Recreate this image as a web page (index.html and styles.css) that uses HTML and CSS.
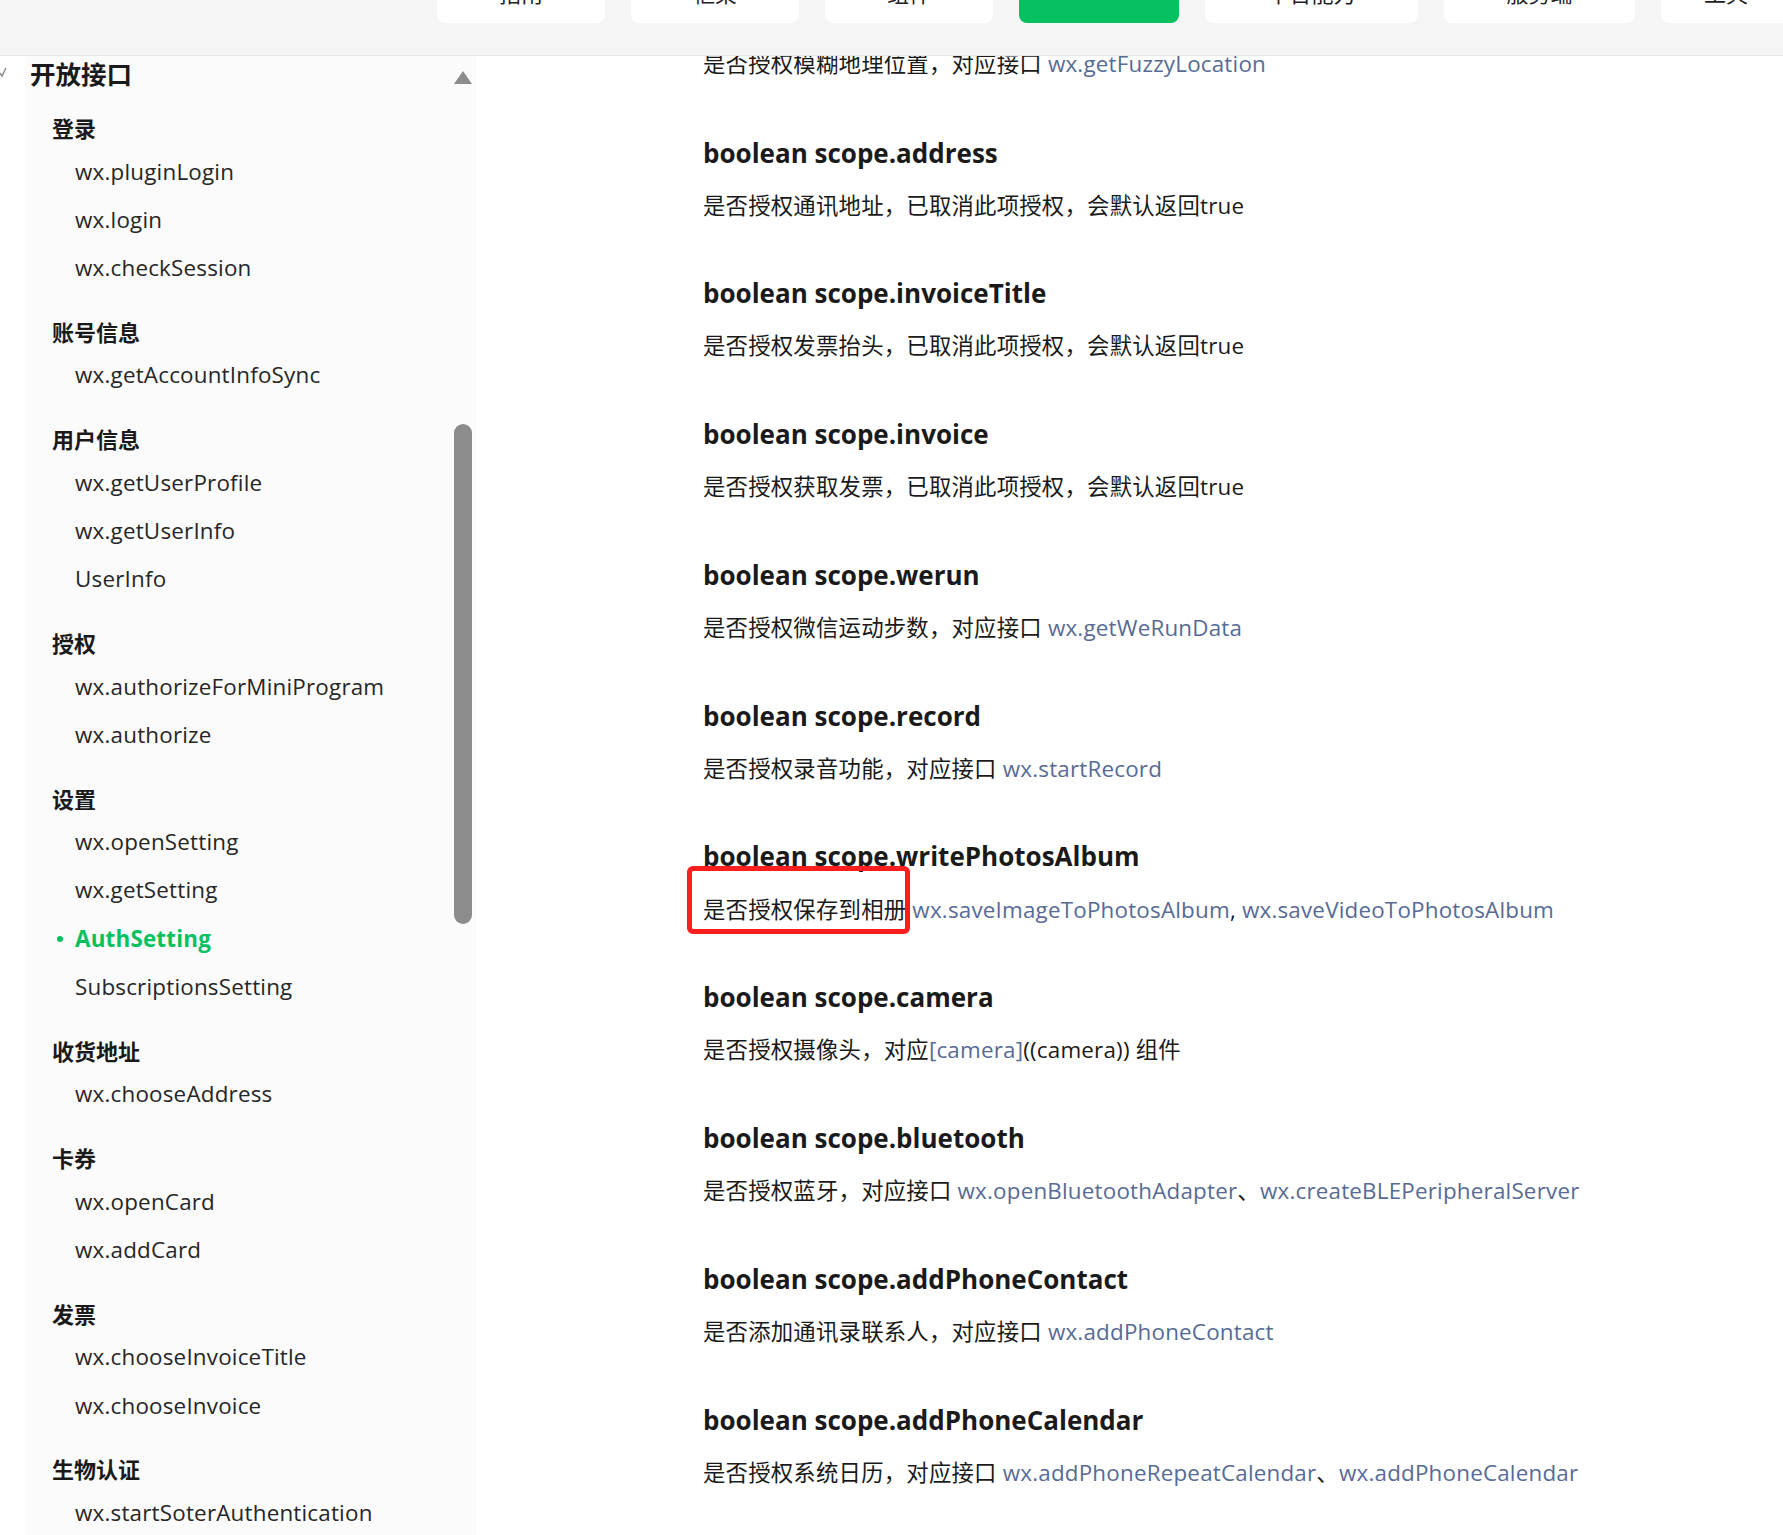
FILE: index.html
```html
<!DOCTYPE html>
<html lang="zh-CN">
<head>
<meta charset="utf-8">
<title>AuthSetting</title>
<link rel="stylesheet" href="styles.css">
</head>
<body>
<header class="topbar">
  <nav class="tabs">
    <a class="tab w168">指南</a>
    <a class="tab w168">框架</a>
    <a class="tab w168">组件</a>
    <a class="tab tab-active w160">API</a>
    <a class="tab w213">平台能力</a>
    <a class="tab w191">服务端</a>
    <a class="tab w130">工具</a>
  </nav>
</header>
<div class="layout">
  <div class="gutter">
    <svg class="fold" width="8" height="12" viewBox="0 0 8 12"><polyline points="0,6 2,9 6,1" fill="none" stroke="#8a8a8a" stroke-width="1.4"/></svg>
  </div>
  <aside class="sidebar">
    <div class="sb-title">开放接口</div>
    <span class="sb-arrow"></span>
    <span class="sb-thumb"></span>
    <div class="group first">
      <div class="g-head">登录</div>
      <div class="item">wx.pluginLogin</div>
      <div class="item">wx.login</div>
      <div class="item">wx.checkSession</div>
    </div>
    <div class="group">
      <div class="g-head">账号信息</div>
      <div class="item">wx.getAccountInfoSync</div>
    </div>
    <div class="group">
      <div class="g-head">用户信息</div>
      <div class="item">wx.getUserProfile</div>
      <div class="item">wx.getUserInfo</div>
      <div class="item">UserInfo</div>
    </div>
    <div class="group">
      <div class="g-head">授权</div>
      <div class="item">wx.authorizeForMiniProgram</div>
      <div class="item">wx.authorize</div>
    </div>
    <div class="group">
      <div class="g-head">设置</div>
      <div class="item">wx.openSetting</div>
      <div class="item">wx.getSetting</div>
      <div class="item active">AuthSetting</div>
      <div class="item">SubscriptionsSetting</div>
    </div>
    <div class="group">
      <div class="g-head">收货地址</div>
      <div class="item">wx.chooseAddress</div>
    </div>
    <div class="group">
      <div class="g-head">卡券</div>
      <div class="item">wx.openCard</div>
      <div class="item">wx.addCard</div>
    </div>
    <div class="group">
      <div class="g-head">发票</div>
      <div class="item">wx.chooseInvoiceTitle</div>
      <div class="item">wx.chooseInvoice</div>
    </div>
    <div class="group">
      <div class="g-head">生物认证</div>
      <div class="item">wx.startSoterAuthentication</div>
    </div>
  </aside>
  <main class="content">
    <p class="desc first">是否授权模糊地理位置，对应接口 <a class="link">wx.getFuzzyLocation</a></p>

    <h3 class="prop">boolean scope.address</h3>
    <p class="desc">是否授权通讯地址，已取消此项授权，会默认返回true</p>

    <h3 class="prop">boolean scope.invoiceTitle</h3>
    <p class="desc">是否授权发票抬头，已取消此项授权，会默认返回true</p>

    <h3 class="prop">boolean scope.invoice</h3>
    <p class="desc">是否授权获取发票，已取消此项授权，会默认返回true</p>

    <h3 class="prop">boolean scope.werun</h3>
    <p class="desc">是否授权微信运动步数，对应接口 <a class="link">wx.getWeRunData</a></p>

    <h3 class="prop">boolean scope.record</h3>
    <p class="desc">是否授权录音功能，对应接口 <a class="link">wx.startRecord</a></p>

    <h3 class="prop">boolean scope.writePhotosAlbum</h3>
    <p class="desc marked"><span class="annot"></span>是否授权保存到相册 <a class="link">wx.saveImageToPhotosAlbum</a>, <a class="link">wx.saveVideoToPhotosAlbum</a></p>

    <h3 class="prop">boolean scope.camera</h3>
    <p class="desc">是否授权摄像头，对应<a class="link">[camera]</a>((camera)) 组件</p>

    <h3 class="prop">boolean scope.bluetooth</h3>
    <p class="desc">是否授权蓝牙，对应接口 <a class="link">wx.openBluetoothAdapter</a>、<a class="link">wx.createBLEPeripheralServer</a></p>

    <h3 class="prop">boolean scope.addPhoneContact</h3>
    <p class="desc">是否添加通讯录联系人，对应接口 <a class="link">wx.addPhoneContact</a></p>

    <h3 class="prop">boolean scope.addPhoneCalendar</h3>
    <p class="desc">是否授权系统日历，对应接口 <a class="link">wx.addPhoneRepeatCalendar</a>、<a class="link">wx.addPhoneCalendar</a></p>
  </main>
</div>
</body>
</html>
```
FILE: styles.css
```css
html, body {
  margin: 0;
  padding: 0;
  height: 100%;
  overflow: hidden;
  background: #ffffff;
}
body {
  font-family: "Open Sans", "Noto Sans CJK SC", sans-serif;
  color: #1a1a1a;
}

/* top bar */
.topbar {
  position: relative;
  z-index: 2;
  height: 55px;
  background: #f5f5f5;
  border-bottom: 1px solid #e9e9e9;
  overflow: hidden;
}
.tabs {
  display: flex;
  gap: 26px;
  padding-left: 437px;
}
.tab {
  flex-shrink: 0;
  box-sizing: border-box;
  height: 23px;
  background: #ffffff;
  border-radius: 0 0 8px 8px;
  display: flex;
  justify-content: center;
  align-items: flex-end;
  padding-bottom: 19px;
  font-size: 22px;
  line-height: 22px;
  color: #222;
  overflow: hidden;
}
.tab-active { background: #07c160; color: #fff; padding-bottom: 22px; }
.w168 { width: 168px; }
.w160 { width: 160px; }
.w213 { width: 213px; }
.w191 { width: 191px; }
.w130 { width: 130px; }

/* layout */
.layout {
  display: flex;
  align-items: flex-start;
}
.gutter {
  width: 25px;
  flex-shrink: 0;
  padding-top: 11px;
}
.fold { display: block; }

/* sidebar */
.sidebar {
  position: relative;
  width: 452px;
  flex-shrink: 0;
  background: #fbfbfb;
  min-height: 1480px;
  padding-left: 5px;
  box-sizing: border-box;
}
.sb-title {
  font-size: 25.5px;
  line-height: 36px;
  font-weight: 700;
  color: #1a1a1a;
}
.sb-arrow {
  position: absolute;
  left: 429px;
  top: 15px;
  width: 0;
  height: 0;
  border-left: 9px solid transparent;
  border-right: 9px solid transparent;
  border-bottom: 13px solid #8c8c8c;
}
.sb-thumb {
  position: absolute;
  left: 429px;
  top: 368px;
  width: 18px;
  height: 500px;
  border-radius: 9px;
  background: #8c8c8c;
}
.group {
  margin-top: 21.5px;
  padding-left: 22px;
}
.group.first { margin-top: 18px; }
.g-head {
  font-size: 22px;
  line-height: 36px;
  margin-bottom: 1.5px;
  font-weight: 700;
  color: #1a1a1a;
}
.item {
  font-size: 22.4px;
  letter-spacing: 0.2px;
  line-height: 48.3px;
  padding-left: 23px;
  color: #262626;
  white-space: nowrap;
  position: relative;
}
.item.active {
  color: #07c160;
  font-weight: 700;
}
.item.active::before {
  content: "";
  position: absolute;
  left: 5px;
  top: 21px;
  width: 6px;
  height: 6px;
  border-radius: 50%;
  background: #07c160;
}

/* content */
.content {
  padding-left: 226px;
  flex: 1;
}
.prop {
  margin: 49.6px 0 0 0;
  font-size: 26px;
  line-height: 40px;
  font-weight: 700;
  color: #1a1a1a;
}
.desc.first + .prop { margin-top: 50.8px; }
.desc {
  margin: 15.2px 0 0 0;
  font-size: 22.4px;
  letter-spacing: 0.2px;
  line-height: 36px;
  color: #1a1a1a;
  white-space: nowrap;
}
.desc.first { margin-top: -10.3px; }
.link {
  color: #576b95;
  text-decoration: none;
}
.marked { position: relative; }
.annot {
  position: absolute;
  left: -16px;
  top: -26px;
  width: 223px;
  height: 68px;
  box-sizing: border-box;
  border: 5px solid #fa1e1e;
  border-radius: 6px;
}
```
